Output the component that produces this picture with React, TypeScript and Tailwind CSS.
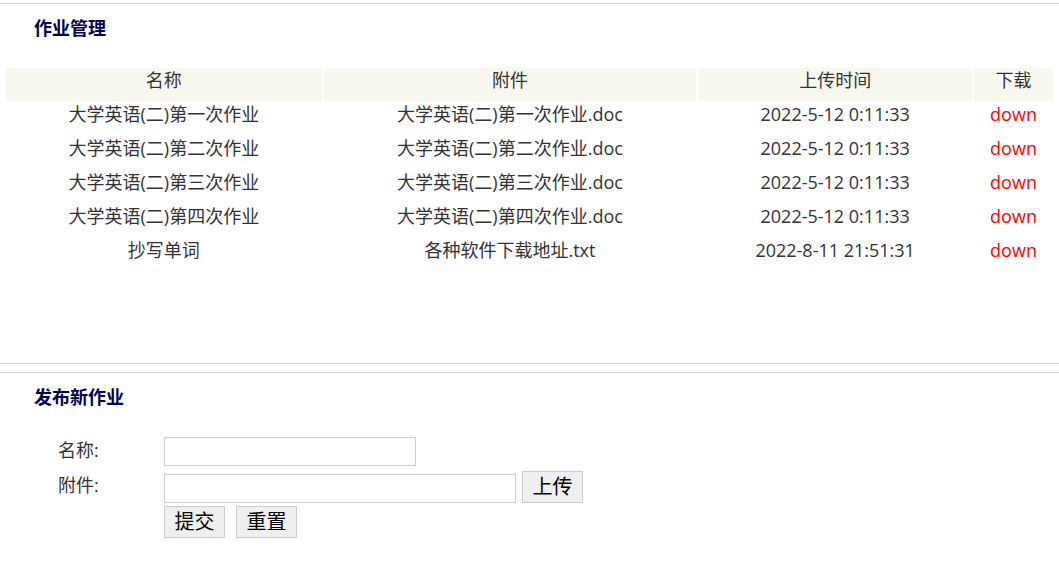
const rows = [
  { name: '大学英语(二)第一次作业', file: '大学英语(二)第一次作业.doc', time: '2022-5-12 0:11:33' },
  { name: '大学英语(二)第二次作业', file: '大学英语(二)第二次作业.doc', time: '2022-5-12 0:11:33' },
  { name: '大学英语(二)第三次作业', file: '大学英语(二)第三次作业.doc', time: '2022-5-12 0:11:33' },
  { name: '大学英语(二)第四次作业', file: '大学英语(二)第四次作业.doc', time: '2022-5-12 0:11:33' },
  { name: '抄写单词', file: '各种软件下载地址.txt', time: '2022-8-11 21:51:31' },
]

function App() {
  return (
    <div className="min-h-screen bg-white text-[18px] text-[#333] font-['Open_Sans','Noto_Sans_CJK_SC',sans-serif]">
      {/* 作业管理 */}
      <div className="mt-[3px] border-t border-b border-[#d0d0d0] h-[361px]">
        <h2 className="pl-[34px] pt-[12px] h-[64px] text-[18px] font-bold leading-[24px] text-[#000055]">作业管理</h2>
        <table className="mx-[4px] border-separate border-spacing-x-[2px] border-spacing-y-0">
          <thead>
            <tr className="h-[33px] leading-[24px]">
              <th className="w-[316px] bg-[#f8f8ef] font-normal align-top">名称</th>
              <th className="w-[373px] bg-[#f8f8ef] font-normal align-top">附件</th>
              <th className="w-[274px] bg-[#f8f8ef] font-normal align-top">上传时间</th>
              <th className="w-[79px] bg-[#f8f8ef] font-normal align-top">下载</th>
            </tr>
          </thead>
          <tbody>
            {rows.map((r, i) => (
              <tr key={i} className="h-[34px] leading-[24px]">
                <td className="text-center align-top pt-[1px]">{r.name}</td>
                <td className="text-center align-top pt-[1px]">{r.file}</td>
                <td className="text-center align-top pt-[1px]">{r.time}</td>
                <td className="text-center align-top pt-[1px]">
                  <a href="#" className="text-[#ff0000]">down</a>
                </td>
              </tr>
            ))}
          </tbody>
        </table>
      </div>

      {/* 发布新作业 */}
      <div className="mt-[8px] border-t border-[#d0d0d0]">
        <h2 className="pl-[34px] pt-[12px] h-[64px] text-[18px] font-bold leading-[24px] text-[#000055]">发布新作业</h2>
        <div className="flex flex-col pl-[58px]">
          <div className="flex items-start">
            <label className="w-[106px] leading-[24px] mt-[1px]">名称:</label>
            <input type="text" className="w-[252px] h-[29px] border border-[#cccccc] bg-white outline-none" />
          </div>
          <div className="flex items-start mt-[8px]">
            <label className="w-[106px] leading-[24px] -mt-[1px]">附件:</label>
            <input type="text" className="w-[352px] h-[29px] border border-[#cccccc] bg-white outline-none" />
            <button className="ml-[6px] -mt-[3px] w-[61px] h-[32px] border border-[#cccccc] bg-[#efefef] text-black text-[20px] leading-[28px]">上传</button>
          </div>
          <div className="flex ml-[106px] gap-[11px] mt-[3px]">
            <button className="w-[61px] h-[32px] border border-[#cccccc] bg-[#efefef] text-black text-[20px] leading-[28px]">提交</button>
            <button className="w-[61px] h-[32px] border border-[#cccccc] bg-[#efefef] text-black text-[20px] leading-[28px]">重置</button>
          </div>
        </div>
      </div>
    </div>
  )
}

export default App
